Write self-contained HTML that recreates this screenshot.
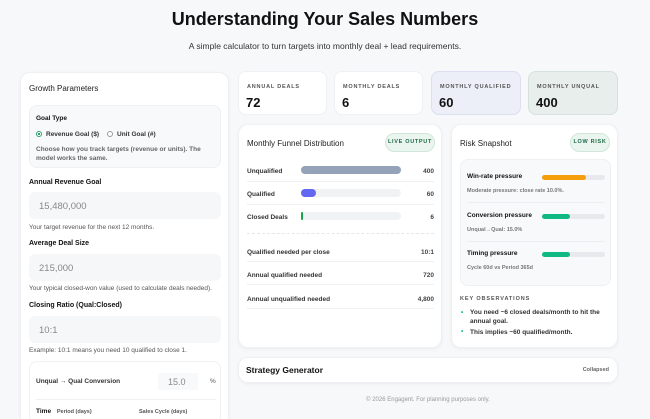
<!DOCTYPE html>
<html style="width:650px;height:419px;overflow:hidden"><head><meta charset="utf-8"><style>
*{box-sizing:border-box;margin:0;padding:0}
body{width:650px;height:419px;overflow:hidden;background:#f7f8fa;font-family:"Liberation Sans",sans-serif;color:#111;position:relative}
.a{position:absolute}
.card{position:absolute;background:#fff;border-radius:10px;box-shadow:0 1px 3px rgba(0,0,0,.05);border:1px solid #eef0f3}
.lbl{font-size:7px;font-weight:bold;color:#111}
.help{font-size:6.5px;color:#555}
.inp{position:absolute;left:8px;width:192px;height:27px;background:#f6f7f8;border-radius:6px;font-size:9.5px;color:#888;padding:9px 0 0 10px}
.stat{position:absolute;top:71px;height:44px;border-radius:8px;background:#fff;border:1px solid #eef0f3}
.stat .t{position:absolute;left:8px;top:12px;font-size:5.5px;font-weight:bold;letter-spacing:.8px;color:#555}
.stat .v{position:absolute;left:7px;top:23px;font-size:13px;font-weight:bold}
.row{position:absolute;left:8px;width:187px;font-size:6.5px;font-weight:bold;color:#333}
.row .r{position:absolute;right:0;top:0;color:#444}
.bar{position:absolute;left:54px;top:-2px;width:100px;height:8px;border-radius:4px;background:#f1f2f4}
.hr{position:absolute;left:8px;width:187px;height:1px;background:#f0f1f3}
.pill{position:absolute;height:19px;border-radius:10px;font-size:5.5px;font-weight:bold;letter-spacing:.7px;color:#1d6b45;background:#eaf5ef;border:1px solid #cfe6d9;text-align:center;line-height:17px}
.rb{position:absolute;left:81px;width:63px;height:5px;border-radius:3px;background:#e8e9ec}
.rb i{display:block;height:5px;border-radius:3px}
</style></head><body>
<div class="a" style="left:0;width:650px;top:9px;text-align:center;font-size:18px;font-weight:bold">Understanding Your Sales Numbers</div>
<div class="a" style="left:0;width:650px;top:41px;text-align:center;font-size:8.5px;color:#333">A simple calculator to turn targets into monthly deal + lead requirements.</div>

<div class="card" style="left:20px;top:72px;width:209px;height:347px;border-bottom:none;border-radius:10px 10px 0 0;overflow:hidden">
 <div class="a" style="left:8px;top:11px;font-size:8px;color:#222">Growth Parameters</div>
 <div class="a" style="left:8px;top:32px;width:192px;height:63px;background:#f8f9fa;border:1px solid #eef0f2;border-radius:8px">
  <div class="a lbl" style="left:6px;top:9px;font-size:6.5px">Goal Type</div>
  <div class="a" style="left:6px;top:25px;width:6px;height:6px;border-radius:50%;border:1px solid #2f9e6a;background:radial-gradient(#2f9e6a 40%,#fff 45%)"></div>
  <div class="a lbl" style="left:16px;top:25px;font-size:6.5px;color:#333">Revenue Goal ($)</div>
  <div class="a" style="left:77px;top:25px;width:6px;height:6px;border-radius:50%;border:1px solid #999;background:#fff"></div>
  <div class="a lbl" style="left:87px;top:25px;font-size:6.5px;color:#333">Unit Goal (#)</div>
  <div class="a help" style="left:6px;top:39px;width:180px;line-height:9px;font-weight:bold;color:#666">Choose how you track targets (revenue or units). The model works the same.</div>
 </div>
 <div class="a lbl" style="left:8px;top:106px">Annual Revenue Goal</div>
 <div class="inp" style="top:119px">15,480,000</div>
 <div class="a help" style="left:8px;top:151px">Your target revenue for the next 12 months.</div>
 <div class="a lbl" style="left:8px;top:167px">Average Deal Size</div>
 <div class="inp" style="top:181px">215,000</div>
 <div class="a help" style="left:8px;top:212px">Your typical closed-won value (used to calculate deals needed).</div>
 <div class="a lbl" style="left:8px;top:229px">Closing Ratio (Qual:Closed)</div>
 <div class="inp" style="top:243px">10:1</div>
 <div class="a help" style="left:8px;top:274px">Example: 10:1 means you need 10 qualified to close 1.</div>
 <div class="a" style="left:8px;top:288px;width:192px;height:59px;background:#fff;border:1px solid #eef0f2;border-bottom:none;border-radius:8px 8px 0 0">
  <div class="a lbl" style="left:6px;top:16px;font-size:6.5px;color:#333">Unqual → Qual Conversion</div>
  <div class="a" style="left:128px;top:11px;width:40px;height:17px;background:#f8f9fa;font-size:9px;color:#888;padding:4px 0 0 10px">15.0</div>
  <div class="a" style="left:180px;top:16px;font-size:6.5px;color:#555">%</div>
  <div class="a" style="left:6px;top:37px;width:180px;height:1px;background:#f0f1f3"></div>
  <div class="a lbl" style="left:6px;top:46px;font-size:6.5px">Time <span style="font-size:5.5px;color:#555;margin-left:4px">Period (days)</span></div>
  <div class="a lbl" style="left:109px;top:47px;font-size:5.5px;color:#555">Sales Cycle (days)</div>
 </div>
</div>

<div class="stat" style="left:238px;width:89px"><div class="t">ANNUAL DEALS</div><div class="v">72</div></div>
<div class="stat" style="left:334px;width:89px"><div class="t">MONTHLY DEALS</div><div class="v">6</div></div>
<div class="stat" style="left:431px;width:90px;background:#eceef8;border-color:#dcdff2"><div class="t">MONTHLY QUALIFIED</div><div class="v">60</div></div>
<div class="stat" style="left:528px;width:90px;background:#e8eeec;border-color:#d6e0dc"><div class="t">MONTHLY UNQUAL</div><div class="v">400</div></div>

<div class="card" style="left:238px;top:124px;width:204px;height:224px">
 <div class="a" style="left:8px;top:14px;font-size:8px;color:#222">Monthly Funnel Distribution</div>
 <div class="pill" style="left:146px;top:8px;width:50px">LIVE OUTPUT</div>
 <div class="row" style="top:43px">Unqualified<div class="bar" style="background:#94a3b8"></div><span class="r">400</span></div>
 <div class="hr" style="top:56px"></div>
 <div class="row" style="top:66px">Qualified<div class="bar"><div style="width:15px;height:8px;border-radius:4px;background:#6366f1"></div></div><span class="r">60</span></div>
 <div class="hr" style="top:79px"></div>
 <div class="row" style="top:89px">Closed Deals<div class="bar"><div style="width:2px;height:8px;border-radius:1px;background:#16a34a"></div></div><span class="r">6</span></div>
 <div class="hr" style="top:108px;background:none;border-top:1px dashed #e6e7ea"></div>
 <div class="row" style="top:124px">Qualified needed per close<span class="r">10:1</span></div>
 <div class="hr" style="top:136px"></div>
 <div class="row" style="top:147px">Annual qualified needed<span class="r">720</span></div>
 <div class="hr" style="top:159px"></div>
 <div class="row" style="top:171px">Annual unqualified needed<span class="r">4,800</span></div>
 <div class="hr" style="top:183px"></div>
</div>

<div class="card" style="left:451px;top:124px;width:167px;height:224px">
 <div class="a" style="left:8px;top:14px;font-size:8px;color:#222">Risk Snapshot</div>
 <div class="pill" style="left:118px;top:8px;width:40px">LOW RISK</div>
 <div class="a" style="left:8px;top:34px;width:151px;height:127px;background:#f8f9fb;border:1px solid #eef0f3;border-radius:8px">
  <div class="a lbl" style="left:6px;top:13px;font-size:6.5px">Win-rate pressure</div>
  <div class="rb" style="top:15px"><i style="width:44px;background:#f59e0b"></i></div>
  <div class="a help" style="left:6px;top:28px;font-size:5.5px;font-weight:bold;color:#777">Moderate pressure: close rate 10.0%.</div>
  <div class="a" style="left:6px;top:42px;width:138px;height:1px;background:#eceef1"></div>
  <div class="a lbl" style="left:6px;top:52px;font-size:6.5px">Conversion pressure</div>
  <div class="rb" style="top:54px"><i style="width:28px;background:#10b981"></i></div>
  <div class="a help" style="left:6px;top:67px;font-size:5.5px;font-weight:bold;color:#777">Unqual→Qual: 15.0%</div>
  <div class="a" style="left:6px;top:81px;width:138px;height:1px;background:#eceef1"></div>
  <div class="a lbl" style="left:6px;top:90px;font-size:6.5px">Timing pressure</div>
  <div class="rb" style="top:92px"><i style="width:28px;background:#10b981"></i></div>
  <div class="a help" style="left:6px;top:105px;font-size:5.5px;font-weight:bold;color:#777">Cycle 60d vs Period 365d</div>
 </div>
 <div class="a" style="left:8px;top:171px;font-size:5.5px;font-weight:bold;letter-spacing:.9px;color:#555">KEY OBSERVATIONS</div>
 <div class="a" style="left:9px;top:184px;font-size:6.5px;font-weight:bold;color:#333;line-height:8.5px;width:150px"><span style="position:absolute;left:0;color:#10b981">•</span><div style="padding-left:9px">You need ~6 closed deals/month to hit the annual goal.</div><span style="position:absolute;left:0;top:19px;color:#10b981">•</span><div style="padding-left:9px;margin-top:3px">This implies ~60 qualified/month.</div></div>
</div>

<div class="card" style="left:238px;top:357px;width:380px;height:26px">
 <div class="a" style="left:7px;top:7px;font-size:8.5px;font-weight:bold">Strategy Generator</div>
 <div class="a" style="right:8px;top:9px;font-size:5.5px;font-weight:bold;color:#666">Collapsed</div>
</div>
<div class="a" style="left:238px;width:380px;top:397px;text-align:center;font-size:6px;color:#999">© 2026 Engagent. For planning purposes only.</div>
</body></html>
